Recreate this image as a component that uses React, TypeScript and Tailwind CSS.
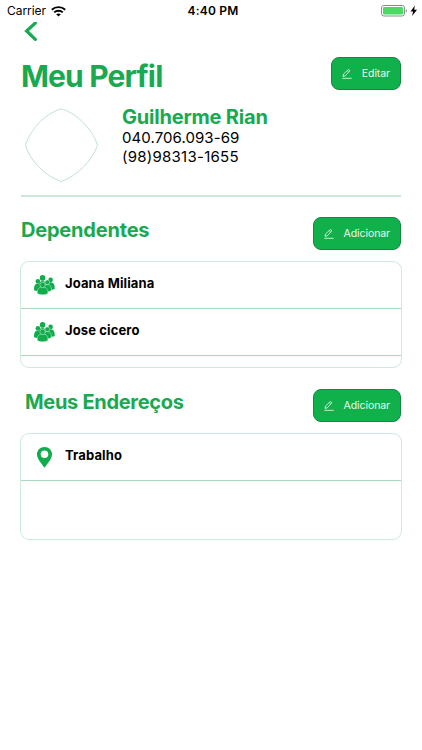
import type { ReactNode } from 'react';

interface Item {
  id: number;
  name: string;
}

const dependentes: Item[] = [
  { id: 1, name: 'Joana Miliana' },
  { id: 2, name: 'Jose cicero' },
];

const enderecos: Item[] = [{ id: 1, name: 'Trabalho' }];

function WifiIcon() {
  return (
    <svg width="15" height="11" viewBox="0 0 15 11" fill="none" stroke="#000" strokeWidth="1.9">
      <path d="M.8 3.7C4.5.2 10.500.2 14.200 3.700" />
      <path d="M3.200 6.400c2.400-2.300 6.200-2.300 8.600 0" />
      <path d="M7.500 10.600 5.200 8.300c1.300-1.200 3.300-1.200 4.600 0z" fill="#000" stroke="none" />
    </svg>
  );
}

function BatteryIcon() {
  return (
    <svg width="37" height="12" viewBox="0 0 37 12">
      <rect x="0.5" y="0.5" width="23" height="10.5" rx="2.4" fill="#fff" stroke="#8b8b8b" />
      <rect x="2" y="2" width="20" height="7.5" rx="1.2" fill="#4cd964" />
      <path d="M24.8 3.9c1.5.5 1.5 3.3 0 3.8z" fill="#8b8b8b" />
      <path d="M33.800.4 29.600 6.500h2.500l-1 4.500 4.900-6.200h-2.800z" fill="#000" />
    </svg>
  );
}

function PencilIcon() {
  return (
    <svg width="10" height="10" viewBox="0 0 10 10" fill="none" stroke="#e2f9e9" strokeWidth="0.85">
      <path d="M1 7.4 1.5 5 6 .8c.8-.6 2.2.7 1.5 1.5L3.2 6.8z" strokeLinejoin="round" />
      <path d="M5.2 1.6 6.8 3.1" />
      <path d="M.3 9.3h9.4" />
    </svg>
  );
}

function PeopleIcon() {
  return (
    <svg width="21" height="20" viewBox="0 0 21 20" fill="#13ac4d">
      <circle cx="8.6" cy="2.9" r="2.8" />
      <circle cx="3.9" cy="6.2" r="2.3" />
      <circle cx="16.6" cy="4.9" r="2.3" />
      <path d="M4.8 10c0-5.4 7.600-5.400 7.600 0v4H4.800z" />
      <path d="M0 15c0-4 .8-6.400 3.900-6.400S8 11 8 15c-2 1.500-6 1.500-8 0z" />
      <path d="M13 13c0-4 .8-5.700 3.500-5.700s4.300 2 4.300 6.500c-1.800 1.500-5 1.200-7.800.2z" />
      <g stroke="#fff" strokeWidth="0.4">
        <circle cx="13.300" cy="7.300" r="2.400" />
        <path d="M9.600 14.600c0-3.400 1-5.100 3.700-5.100s4.200 2 4.200 6c-2 1.700-5.600 1.700-7.900.6z" />
        <path d="M3.200 18.400c0-4.300 1.500-6.500 5.400-6.500s5.400 2.200 5.400 6.500c-2.700 1.900-8.100 1.900-10.800 0z" />
        <circle cx="8.600" cy="9.900" r="2.700" />
      </g>
    </svg>
  );
}

function PinIcon() {
  return (
    <svg width="16" height="21" viewBox="0 0 16 21" fill="#13ac4d">
      <path
        fillRule="evenodd"
        d="M7.500 0C3.200 0 0 3.200 0 7.300c0 4.600 4 8.600 7.500 13.400 3.500-4.800 7.500-8.800 7.500-13.400C15 3.200 11.800 0 7.500 0zm0 3.500a3.800 3.800 0 1 1 0 7.600 3.800 3.800 0 0 1 0-7.600z"
      />
    </svg>
  );
}

function ActionButton({ label }: { label: string }) {
  return (
    <button className="flex h-[33px] items-center gap-[10px] rounded-[8px] border border-[#168744] bg-[#10b14b] px-[10px] text-[10.5px] leading-none tracking-[-0.07px] text-[#e8faed]">
      <PencilIcon />
      <span className="pt-[2px]">{label}</span>
    </button>
  );
}

function ListCard({ items, icon }: { items: Item[]; icon: ReactNode }) {
  return (
    <div className="h-[107px] overflow-hidden rounded-[9px] border border-[#cdeadb]">
      {items.map(item => (
        <div key={item.id} className="flex h-[47px] items-center border-b border-[#a9d9c0] pl-[13px]">
          <span className="flex w-[21px] justify-center">{icon}</span>
          <span className="ml-[10px] pb-[3px] text-[13px] font-bold tracking-[0.12px] text-black">{item.name}</span>
        </div>
      ))}
    </div>
  );
}

export default function App() {
  return (
    <div className="h-[750px] overflow-hidden bg-white font-['Inter',sans-serif]">
      <div className="grid h-[22px] grid-cols-3 items-center pr-[4px] pl-[7px] text-[12px] text-black">
        <div className="flex items-center gap-[5px]">
          <span className="tracking-[-0.05px]">Carrier</span>
          <WifiIcon />
        </div>
        <span className="pl-[1px] text-center text-[12px] font-semibold tracking-[0.2px]">4:40 PM</span>
        <div className="flex justify-end">
          <BatteryIcon />
        </div>
      </div>

      <main className="px-[20px]">
        <button className="ml-[4px] block h-[20px]">
          <svg width="14" height="20" viewBox="0 0 14 20" fill="none" stroke="#19a950" strokeWidth="3.2">
            <path d="M11.300 1 2.600 9l8.700 8.400" strokeLinecap="round" />
          </svg>
        </button>

        <div className="mt-[15px] flex h-[38px] items-start justify-between pr-[1px]">
          <h1 className="ml-[1px] text-[30px] leading-[38px] font-bold tracking-[-0.85px] text-[#19a950]">Meu Perfil</h1>
          <ActionButton label="Editar" />
        </div>

        <div className="mt-[13px] flex h-[87px]">
          <svg className="ml-[4px]" width="75" height="75" viewBox="0 0 75 75" fill="none" stroke="#b9dfcc">
            <path
              d="M37.300 1C50 4 68 19 73.500 37.300 68 53 53 68 37.300 73.500 21 68 6 53 1.500 37.300 7 19 24 4 37.300 1z"
              strokeWidth="0.9"
            />
          </svg>
          <div className="ml-[23px]">
            <h2 className="-mt-[3px] text-[20px] leading-[24px] font-bold tracking-[-0.2px] text-[#19a950]">
              Guilherme Rian
            </h2>
            <p className="text-[15px] leading-[18px] tracking-[0.08px] text-black">040.706.093-69</p>
            <p className="text-[15px] leading-[19px] tracking-[0.25px] text-black">(98)98313-1655</p>
          </div>
        </div>
        <hr className="mr-[1px] ml-[1px] h-[2px] border-0 bg-[#cce8da]" />

        <section className="mt-[20px]">
          <div className="flex h-[44px] items-start justify-between pr-[1px]">
            <h2 className="ml-[1px] text-[20px] leading-[26px] font-bold tracking-[-0.2px] text-[#19a950]">
              Dependentes
            </h2>
            <ActionButton label="Adicionar" />
          </div>
          <ListCard items={dependentes} icon={<PeopleIcon />} />
        </section>

        <section className="mt-[21px]">
          <div className="flex h-[44px] items-start justify-between pr-[1px]">
            <h2 className="ml-[5px] text-[20px] leading-[26px] font-bold tracking-[-0.3px] text-[#19a950]">
              Meus Endereços
            </h2>
            <ActionButton label="Adicionar" />
          </div>
          <ListCard items={enderecos} icon={<PinIcon />} />
        </section>
      </main>
    </div>
  );
}
